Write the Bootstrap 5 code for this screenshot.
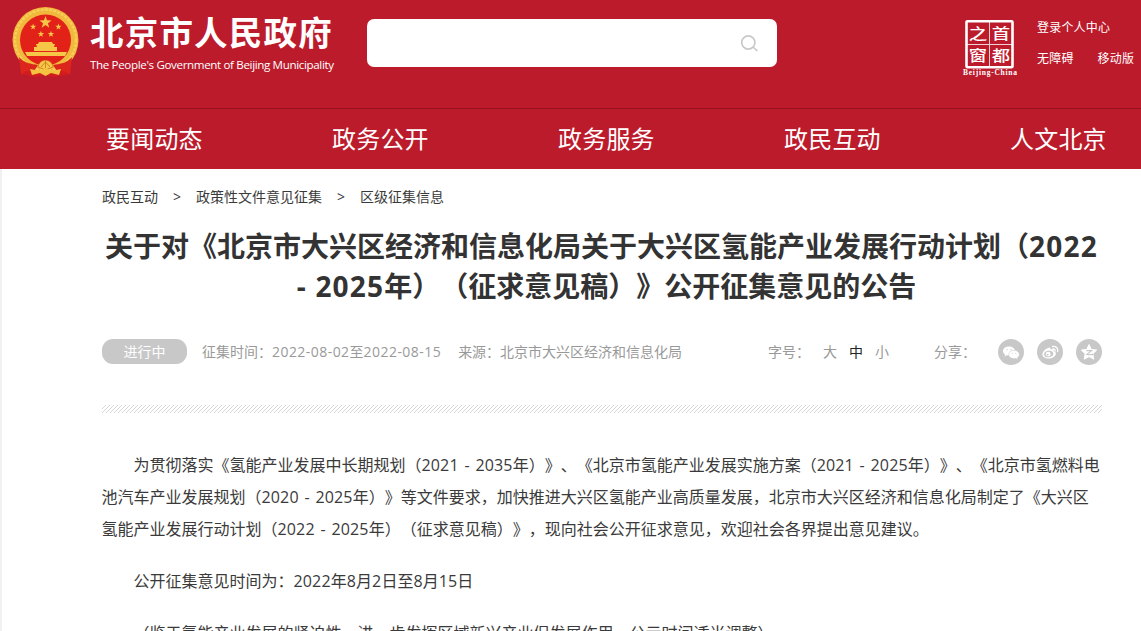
<!DOCTYPE html>
<html lang="zh-CN">
<head>
<meta charset="utf-8">
<meta name="viewport" content="width=device-width, initial-scale=1">
<title>北京市人民政府</title>
<link href="https://cdn.jsdelivr.net/npm/bootstrap@5.3.0/dist/css/bootstrap.min.css" rel="stylesheet">
<style>
body{font-family:"Open Sans","Noto Sans CJK SC",sans-serif;color:#3a3a3a;background:#fff;overflow:hidden;text-spacing-trim:space-all;font-size:14px;height:631px}
a{color:inherit;text-decoration:none}
.site-head{background:#bc1b2c;color:#fff}
.head-top{height:108px;padding-left:12px}
.emblem{width:67px;height:72px;margin-top:6px;flex:none}
.brand-box{margin-left:11px;width:277px;white-space:nowrap;flex:none}
.brand-cn{font-size:33.5px;font-weight:700;letter-spacing:1.2px;line-height:40px;margin-top:12px}
.brand-en{font-size:11.6px;line-height:18px;margin-top:4px;letter-spacing:-.36px}
.search-box{width:410px;height:48px;background:#fff;border-radius:7px;margin-top:19px;padding-right:18px;flex:none}
.seal{width:56px;height:60px;margin:18px 0 0 185px;flex:none}
.tools{margin:19px 0 0 19px;font-size:12px;line-height:18px;letter-spacing:.2px;white-space:nowrap}
.tools-row{margin-top:13px}
.main-nav{height:61px;border-top:1px solid #980f1d;padding-left:106px;line-height:59px}
.main-nav a{width:226px;flex:none;color:#fff;font-size:24px;letter-spacing:.2px}
.main-nav a:last-child{width:auto}
.page{padding:0 39px 0 102px;box-shadow:inset 2px 0 0 #f1f1f1;height:462px;overflow:hidden}
.crumbs{font-size:14px;line-height:20px;padding-top:18px}
.crumbs .gt{width:38px;padding-left:15px}
h1{font-size:28px;font-weight:700;line-height:40px;margin:19px 0 0 -1px;white-space:nowrap;color:#333}
h1 .num{letter-spacing:1.2px}
h1 .lead-gap{padding-left:10px}
.meta{margin-top:31px;height:28px;color:#999;white-space:nowrap;font-size:14px}
.state{width:85px;height:25px;border-radius:11px;background:#c8c8c8;color:#fff;font-weight:400;font-size:14px;line-height:25px;padding:0}
.period{margin-left:15px}
.origin{margin-left:17px}
.date{letter-spacing:.45px}
.sizes{gap:12px;margin-left:13px}
.share-label{margin:0 9px 0 45px}
.share{width:26px;height:26px;margin-left:13px;margin-top:2px}
.hatch{margin-top:40px}
.body-text{font-size:16px;line-height:32px;margin:20px 0 0 -.5px;white-space:nowrap;text-indent:2em}
.body-text.first{margin-top:36px}
.body-text span{letter-spacing:.15px;word-spacing:1.4px}
</style>
</head>
<body>
<header class="site-head">
  <div class="head-top d-flex align-items-start">
    <svg class="emblem" viewBox="0 0 67 72">
      <path d="M8 51L10 68 23 71 33 69 43 71 57 68 60 51z" fill="#d31c1d"/>
      <circle cx="33.5" cy="34" r="33" fill="#f0b83c"/>
      <circle cx="33.5" cy="34" r="30.500" fill="none" stroke="#f7cf58" stroke-width="2.500" stroke-dasharray="3 1.200"/>
      <circle cx="33.5" cy="34" r="25.500" fill="#e22119"/>
      <g fill="#f6c746">
        <path id="star" d="M33.5 10l1.5 4.3 4.6.1-3.7 2.8 1.4 4.500-3.800-2.700-3.800 2.700 1.400-4.500-3.700-2.800 4.600-.1z"/>
        <use href="#star" transform="translate(3.700 12.300) scale(.52)"/>
        <use href="#star" transform="translate(29 12.300) scale(.52)"/>
        <use href="#star" transform="translate(11.500 19.500) scale(.52)"/>
        <use href="#star" transform="translate(21.500 19.500) scale(.52)"/>
        <path d="M24 38h2l1-2h13l1 2h2l-1 3h3v4h-23v-4h3zM13 46h42l-2 4H15z"/>
      </g>
      <path d="M7 51c5 6 12 7 19 8l-4 6C16 64 12 65 9 69zM60 51c-5 6-12 7-19 8l4 6c6-1 10 0 13 4z" fill="#dc261d"/>
      <path d="M26 61c1-9 14-9 15 0l-7.500 3z" fill="#f6c746" stroke="#c8641c" stroke-width=".7"/>
      <path d="M29 61l4.500-5 4.500 5M33.500 55v7" fill="none" stroke="#cf8824"/>
      <path d="M18 63l10 2 5.500-3 5.500 3 10-2-2 6-8-2-5.500 3-5.500-3-8 2z" fill="#f3c33f"/>
    </svg>
    <div class="brand-box">
      <div class="brand-cn">北京市人民政府</div>
      <div class="brand-en">The People's Government of Beijing Municipality</div>
    </div>
    <div class="search-box d-flex align-items-center justify-content-end">
      <svg width="19" height="19" viewBox="0 0 19 19" fill="none" stroke="#c9c9c9" stroke-width="1.700"><circle cx="8.300" cy="8.500" r="6.600"/><path d="M13.100 13l4.200 4"/></svg>
    </div>
    <svg class="seal" viewBox="0 0 56 60" fill="#fff">
      <rect x="4.500" y="3.200" width="46" height="46" fill="none" stroke="#fff" stroke-width="2.600" rx="1"/>
      <path d="M27.500 4v45M5 26.500h45" stroke="#fff" stroke-width="1" opacity=".8"/>
      <g font-family="Noto Sans CJK SC,sans-serif" font-size="18" font-weight="500" text-anchor="middle">
        <text transform="translate(16 21) scale(1.020 .82)">之</text><text transform="translate(39 21) scale(1.020 .82)">首</text>
        <text transform="translate(16 43) scale(1.020 .84)">窗</text><text transform="translate(39 43) scale(1.020 .84)">都</text>
      </g>
      <text x="1" y="57" font-family="Liberation Serif,serif" font-weight="700" font-size="7.500" textLength="54">Beijing-China</text>
    </svg>
    <div class="tools">
      <a href="#" class="d-block">登录个人中心</a>
      <div class="tools-row d-flex"><a href="#">无障碍</a><a href="#" class="ms-4">移动版</a></div>
    </div>
  </div>
  <nav class="main-nav d-flex flex-nowrap">
    <a href="#">要闻动态</a><a href="#">政务公开</a><a href="#">政务服务</a><a href="#">政民互动</a><a href="#">人文北京</a>
  </nav>
</header>
<main class="page">
  <div class="crumbs d-flex"><a href="#">政民互动</a><span class="gt">&gt;</span><a href="#">政策性文件意见征集</a><span class="gt">&gt;</span><a href="#">区级征集信息</a></div>
  <h1 class="text-center">关于对《北京市大兴区经济和信息化局关于大兴区氢能产业发展行动计划（<span class="num">2022</span><br><span class="num lead-gap">- 2025</span>年）（征求意见稿）》公开征集意见的公告</h1>
  <div class="meta d-flex align-items-center">
    <span class="state badge">进行中</span>
    <span class="period">征集时间：<span class="date">2022-08-02</span>至<span class="date">2022-08-15</span></span>
    <span class="origin">来源：北京市大兴区经济和信息化局</span>
    <span class="ms-auto">字号：</span>
    <div class="sizes d-flex"><a href="#">大</a><a href="#" class="text-dark">中</a><a href="#">小</a></div>
    <span class="share-label">分享：</span>
    <svg class="share" viewBox="0 0 26 26"><circle cx="13" cy="13" r="13" fill="#c8c8c8"/><path d="M11 7.500c-3.400 0-6 2-6 4.600 0 1.500.8 2.700 2 3.500l-.4 1.800 2.100-1.100 2.300.3c3.300 0 6-2.100 6-4.600s-2.700-4.500-6-4.500z" fill="#fff"/><path d="M16 11.300c-3 0-5.300 1.900-5.300 4.200s2.400 4.200 5.300 4.200l1.900-.3 1.900 1-.4-1.700c1.200-.8 1.900-1.900 1.900-3.200 0-2.300-2.400-4.200-5.300-4.200z" fill="#fff" stroke="#c8c8c8" stroke-width=".5"/><g fill="#c8c8c8"><circle cx="9" cy="10.700" r=".6"/><circle cx="13" cy="10.700" r=".6"/><circle cx="14.300" cy="14.300" r=".5"/><circle cx="17.800" cy="14.300" r=".5"/></g></svg>
    <svg class="share" viewBox="0 0 26 26"><circle cx="13" cy="13" r="13" fill="#c8c8c8"/><path d="M11.500 8.700c1.500-.5 2.400.3 2 1.800 2.200-.7 3.800-.2 3.300 1.700 1.500.5 2.200 1.400 2 2.700-.3 2.600-3.600 4.500-7.300 4.500-3.500 0-6.200-1.600-6.100-4.200.1-2.500 3.300-5.700 6.100-6.500z" fill="#fff"/><ellipse cx="11.700" cy="15" rx="4.600" ry="3.200" fill="#c8c8c8" transform="rotate(-8 11.700 15)"/><circle cx="11.200" cy="15.200" r="2.400" fill="#fff"/><circle cx="10.700" cy="15.700" r=".9" fill="#c8c8c8"/><path d="M15.500 7.500c3.400-.8 6 1.700 5.100 5M16 10c1.500-.3 2.500.7 2.100 2" fill="none" stroke="#fff" stroke-width="1.300" stroke-linecap="round"/></svg>
    <svg class="share" viewBox="0 0 26 26"><circle cx="13" cy="13" r="13" fill="#c8c8c8"/><path d="M13 5.500l2.300 4.900 5.400.7-3.900 3.700 1 5.400-4.800-2.600-4.800 2.600 1-5.400-3.900-3.700 5.400-.7z" fill="#fff" stroke="#fff" stroke-width="1" stroke-linejoin="round"/><path d="M10.300 11.700h5.200l-4.600 3.700c2 .5 4 .5 6.300 0" fill="none" stroke="#c8c8c8" stroke-width="1.200"/></svg>
  </div>
  <svg class="hatch d-block" width="1000" height="8"><defs><pattern id="lines" width="4" height="8" patternUnits="userSpaceOnUse"><path d="M-8 8L0 0M-4 8L4 0M0 8L8 0M4 8L12 0" stroke="#d2d2d2" stroke-width=".9"/></pattern></defs><rect width="1000" height="8" fill="url(#lines)"/></svg>
  <p class="body-text first">为贯彻落实《氢能产业发展中长期规划（<span>2021 - 2035</span>年）》、《北京市氢能产业发展实施方案（<span>2021 - 2025</span>年）》、《北京市氢燃料电<br>池汽车产业发展规划（<span>2020 - 2025</span>年）》等文件要求，加快推进大兴区氢能产业高质量发展，北京市大兴区经济和信息化局制定了《大兴区<br>氢能产业发展行动计划（<span>2022 - 2025</span>年）（征求意见稿）》，现向社会公开征求意见，欢迎社会各界提出意见建议。</p>
  <p class="body-text">公开征集意见时间为：<span>2022</span>年<span>8</span>月<span>2</span>日至<span>8</span>月<span>15</span>日</p>
  <p class="body-text">（鉴于氢能产业发展的紧迫性，进一步发挥区域新兴产业促发展作用，公示时间适当调整）</p>
</main>
<script src="https://cdn.jsdelivr.net/npm/bootstrap@5.3.0/dist/js/bootstrap.bundle.min.js"></script>
</body>
</html>
